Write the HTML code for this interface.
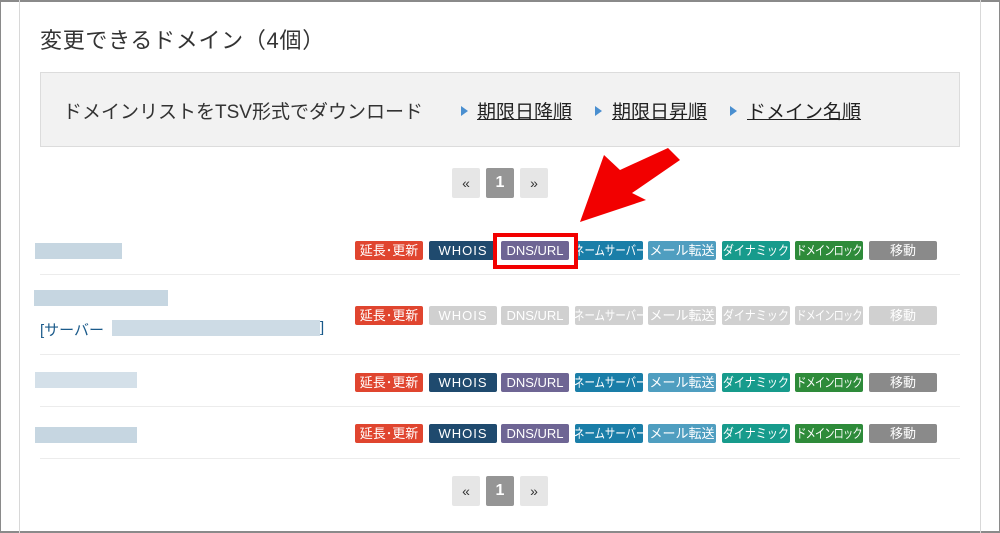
<!DOCTYPE html>
<html><head><meta charset="utf-8"><style>
*{margin:0;padding:0;box-sizing:border-box}
body{width:1000px;height:533px;background:#fff;position:relative;overflow:hidden;font-family:"Liberation Sans","Noto Sans CJK JP",sans-serif;color:#333}
.frame{position:absolute;left:0;top:0;width:1000px;height:533px;border:1px solid #8a8a8a;border-top-width:2px;border-bottom-width:2px}
.vl{position:absolute;top:0;height:533px;width:1px;background:#d8d8d8}
h1{position:absolute;left:40px;top:23px;font-size:22px;font-weight:normal;color:#333;letter-spacing:0.7px}
.box{position:absolute;left:40px;top:72px;width:920px;height:75px;background:#f2f2f2;border:1px solid #dcdcdc;font-size:19px}
.box span{position:absolute;top:24px;white-space:nowrap}
.box a{color:#222;text-decoration:underline}
.tri{position:absolute;top:33px;width:0;height:0;border-left:7px solid #4a8fd0;border-top:5px solid transparent;border-bottom:5px solid transparent}
.pg{position:absolute;width:28px;height:30px;background:#e6e6e6;border-radius:2px;font-size:14px;text-align:center;line-height:30px;color:#333}
.pg.on{background:#959595;color:#fff;font-weight:bold;font-size:16px}
.b{position:absolute;width:68px;height:19px;border-radius:2px;color:#fff;font-size:13px;text-align:center;line-height:19px;white-space:nowrap;overflow:hidden}
.b i{font-style:normal;display:inline-block}
.n i{transform:scaleX(.8);margin:0 -10px}
.y i{transform:scaleX(.85);margin:0 -10px}
.d i{transform:scaleX(.78);margin:0 -10px;letter-spacing:-1px}
.sep{position:absolute;left:40px;width:920px;height:1px;background:#ececec}
.blur{position:absolute;height:16px;background:#b8ccda}
</style></head><body>
<div class="frame"></div>
<div class="vl" style="left:19px"></div>
<div class="vl" style="left:980px"></div>
<h1>変更できるドメイン（4個）</h1>
<div class="box">
<span style="left:22px;color:#333">ドメインリストをTSV形式でダウンロード</span>
<div class="tri" style="left:420px"></div><span style="left:436px"><a>期限日降順</a></span>
<div class="tri" style="left:554px"></div><span style="left:571px"><a>期限日昇順</a></span>
<div class="tri" style="left:689px"></div><span style="left:706px"><a>ドメイン名順</a></span>
</div>
<div class="pg" style="left:452px;top:168px">«</div><div class="pg on" style="left:486px;top:168px">1</div><div class="pg" style="left:520px;top:168px">»</div>
<div class="pg" style="left:452px;top:476px">«</div><div class="pg on" style="left:486px;top:476px">1</div><div class="pg" style="left:520px;top:476px">»</div>

<div class="blur" style="left:35px;top:243px;width:87px;opacity:.8"></div>
<div class="sep" style="top:274px"></div>
<div class="blur" style="left:34px;top:290px;width:134px;opacity:.8"></div>
<div style="position:absolute;left:40px;top:319px;font-size:15px;color:#1a5a8a">[サーバー</div>
<div class="blur" style="left:112px;top:320px;width:208px;opacity:.7"></div>
<div style="position:absolute;left:320px;top:319px;font-size:15px;color:#1a5a8a">]</div>
<div class="sep" style="top:354px"></div>
<div class="blur" style="left:35px;top:372px;width:102px;opacity:.6"></div>
<div class="sep" style="top:406px"></div>
<div class="blur" style="left:35px;top:427px;width:102px;opacity:.8"></div>
<div class="sep" style="top:458px"></div>

<!-- row 1 -->
<div class="b" style="left:355px;top:241px;background:#e0452f"><i>延長･更新</i></div>
<div class="b" style="left:429px;top:241px;background:#1f4a6e;letter-spacing:1px"><i>WHOIS</i></div>
<div class="b" style="left:501px;top:241px;background:#6e6594"><i>DNS/URL</i></div>
<div class="b n" style="left:575px;top:241px;background:#1a7ea8"><i>ネームサーバー</i></div>
<div class="b" style="left:648px;top:241px;background:#4f9ec0"><i>メール転送</i></div>
<div class="b y" style="left:722px;top:241px;background:#179b8c"><i>ダイナミック</i></div>
<div class="b d" style="left:795px;top:241px;background:#2e8b3a"><i>ドメインロック</i></div>
<div class="b" style="left:869px;top:241px;background:#8a8a8a"><i>移動</i></div>
<!-- row 2 -->
<div class="b" style="left:355px;top:306px;background:#e0452f"><i>延長･更新</i></div>
<div class="b" style="left:429px;top:306px;background:#d0d0d0;letter-spacing:1px"><i>WHOIS</i></div>
<div class="b" style="left:501px;top:306px;background:#d0d0d0"><i>DNS/URL</i></div>
<div class="b n" style="left:575px;top:306px;background:#d0d0d0"><i>ネームサーバー</i></div>
<div class="b" style="left:648px;top:306px;background:#d0d0d0"><i>メール転送</i></div>
<div class="b y" style="left:722px;top:306px;background:#d0d0d0"><i>ダイナミック</i></div>
<div class="b d" style="left:795px;top:306px;background:#d0d0d0"><i>ドメインロック</i></div>
<div class="b" style="left:869px;top:306px;background:#d0d0d0"><i>移動</i></div>
<!-- row 3 -->
<div class="b" style="left:355px;top:373px;background:#e0452f"><i>延長･更新</i></div>
<div class="b" style="left:429px;top:373px;background:#1f4a6e;letter-spacing:1px"><i>WHOIS</i></div>
<div class="b" style="left:501px;top:373px;background:#6e6594"><i>DNS/URL</i></div>
<div class="b n" style="left:575px;top:373px;background:#1a7ea8"><i>ネームサーバー</i></div>
<div class="b" style="left:648px;top:373px;background:#4f9ec0"><i>メール転送</i></div>
<div class="b y" style="left:722px;top:373px;background:#179b8c"><i>ダイナミック</i></div>
<div class="b d" style="left:795px;top:373px;background:#2e8b3a"><i>ドメインロック</i></div>
<div class="b" style="left:869px;top:373px;background:#8a8a8a"><i>移動</i></div>
<!-- row 4 -->
<div class="b" style="left:355px;top:424px;background:#e0452f"><i>延長･更新</i></div>
<div class="b" style="left:429px;top:424px;background:#1f4a6e;letter-spacing:1px"><i>WHOIS</i></div>
<div class="b" style="left:501px;top:424px;background:#6e6594"><i>DNS/URL</i></div>
<div class="b n" style="left:575px;top:424px;background:#1a7ea8"><i>ネームサーバー</i></div>
<div class="b" style="left:648px;top:424px;background:#4f9ec0"><i>メール転送</i></div>
<div class="b y" style="left:722px;top:424px;background:#179b8c"><i>ダイナミック</i></div>
<div class="b d" style="left:795px;top:424px;background:#2e8b3a"><i>ドメインロック</i></div>
<div class="b" style="left:869px;top:424px;background:#8a8a8a"><i>移動</i></div>

<div style="position:absolute;left:493px;top:233px;width:85px;height:36px;border:4px solid #f20000"></div>
<svg style="position:absolute;left:0;top:0" width="1000" height="533">
<polygon points="580,222 604,155 620,170 668,148 680,160 632,193 646,200" fill="#f20000"/>
</svg>
</body></html>
